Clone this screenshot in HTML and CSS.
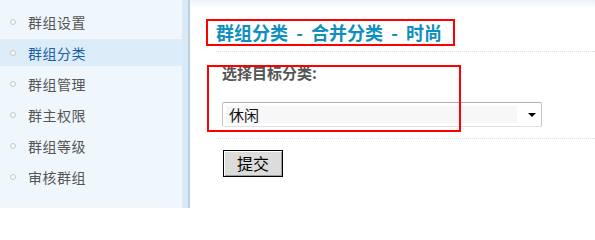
FILE: index.html
```html
<!DOCTYPE html>
<html lang="zh-CN">
<head>
<meta charset="utf-8">
<title>群组分类</title>
<link rel="stylesheet" href="styles.css">
</head>
<body>
<div class="page">
  <aside class="sidebar">
    <ul class="menu">
      <li class="item"><span class="dot"></span>群组设置</li>
      <li class="item active"><span class="dot"></span>群组分类</li>
      <li class="item"><span class="dot"></span>群组管理</li>
      <li class="item"><span class="dot"></span>群主权限</li>
      <li class="item"><span class="dot"></span>群组等级</li>
      <li class="item"><span class="dot"></span>审核群组</li>
    </ul>
    <div class="rail"></div>
  </aside>
  <main class="main">
    <h1 class="title"><span>群组分类</span><span class="sep">-</span><span>合并分类</span><span class="sep">-</span><span>时尚</span></h1>
    <div class="rule"></div>
    <div class="form">
      <div class="label">选择目标分类:</div>
      <div class="select">
        <div class="field">休闲</div>
        <span class="arrow"></span>
      </div>
      <div class="mark"></div>
    </div>
    <div class="rule"></div>
    <div class="actions">
      <div class="button">提交</div>
    </div>
  </main>
</div>
</body>
</html>
```

FILE: styles.css
```css
html, body {
  margin: 0;
  padding: 0;
  background: #fff;
}
body {
  font-family: "Noto Sans CJK SC", "Noto Sans", sans-serif;
  width: 595px;
  height: 208px;
  overflow: hidden;
}
.page {
  display: flex;
  height: 208px;
}
.sidebar {
  display: flex;
  flex: none;
  width: 190px;
  background: #eff7fc;
}
.menu {
  list-style: none;
  margin: 0;
  padding: 8px 0 0 0;
  width: 182px;
}
.item {
  display: flex;
  align-items: center;
  height: 27px;
  margin-bottom: 4px;
  padding-left: 10px;
  font-size: 14px;
  letter-spacing: 0.5px;
  color: #555;
}
.item.active {
  background: #dcecf8;
  color: #1d5ea5;
}
.dot {
  flex: none;
  width: 4px;
  height: 4px;
  border: 1.5px solid #c6c6c6;
  border-radius: 50%;
  background: #fbfbfb;
  margin-right: 12px;
}
.rail {
  flex: none;
  width: 6px;
  background: #d9e9f5;
  border-right: 2px solid #b6d1e5;
}
.main {
  flex: 1;
  position: relative;
  background: linear-gradient(#eaf3fa, #ffffff 8px);
}
.title {
  display: inline-block;
  margin: 19px 0 0 16px;
  padding: 0 11px 0 8px;
  height: 23px;
  line-height: 23px;
  border: 2px solid #ff0000;
  font-size: 18px;
  font-weight: bold;
  color: #0e8fc1;
  white-space: nowrap;
}
.sep {
  display: inline-block;
  width: 23px;
  text-align: center;
}
.rule {
  margin-left: 26px;
  border-top: 1px dotted #cfe0ec;
}
.title + .rule {
  margin-top: 5px;
}
.form {
  padding: 13px 0 11px 32px;
}
.label {
  font-size: 15px;
  font-weight: bold;
  color: #555;
  line-height: 16px;
  height: 16px;
}
.select {
  display: flex;
  align-items: center;
  margin-top: 21px;
  width: 318px;
  height: 23px;
  border: 1px solid #c2c6cc;
  border-top-color: #aeb0b8;
  border-bottom-color: #dde2e8;
  border-radius: 2px;
  background: #fff;
}
.field {
  margin-left: 3px;
  width: 288px;
  height: 17px;
  line-height: 17px;
  padding-left: 3px;
  background: #f7f7f7;
  font-size: 15px;
  color: #111;
}
.arrow {
  margin-left: 11px;
  width: 0;
  height: 0;
  border-left: 4px solid transparent;
  border-right: 4px solid transparent;
  border-top: 4px solid #000;
}
.mark {
  position: absolute;
  left: 17px;
  top: 65px;
  width: 250px;
  height: 63px;
  border: 2px solid #ff0000;
}
.actions {
  padding: 11px 0 0 33px;
}
.button {
  box-sizing: border-box;
  width: 60px;
  height: 27px;
  border: 1px solid #000;
  background: #dcdcdc;
  box-shadow: inset 1px 1px 0 #fff, inset -1px -1px 0 #9c9c9c;
  font-size: 16px;
  line-height: 25px;
  text-align: center;
  color: #000;
}
```
